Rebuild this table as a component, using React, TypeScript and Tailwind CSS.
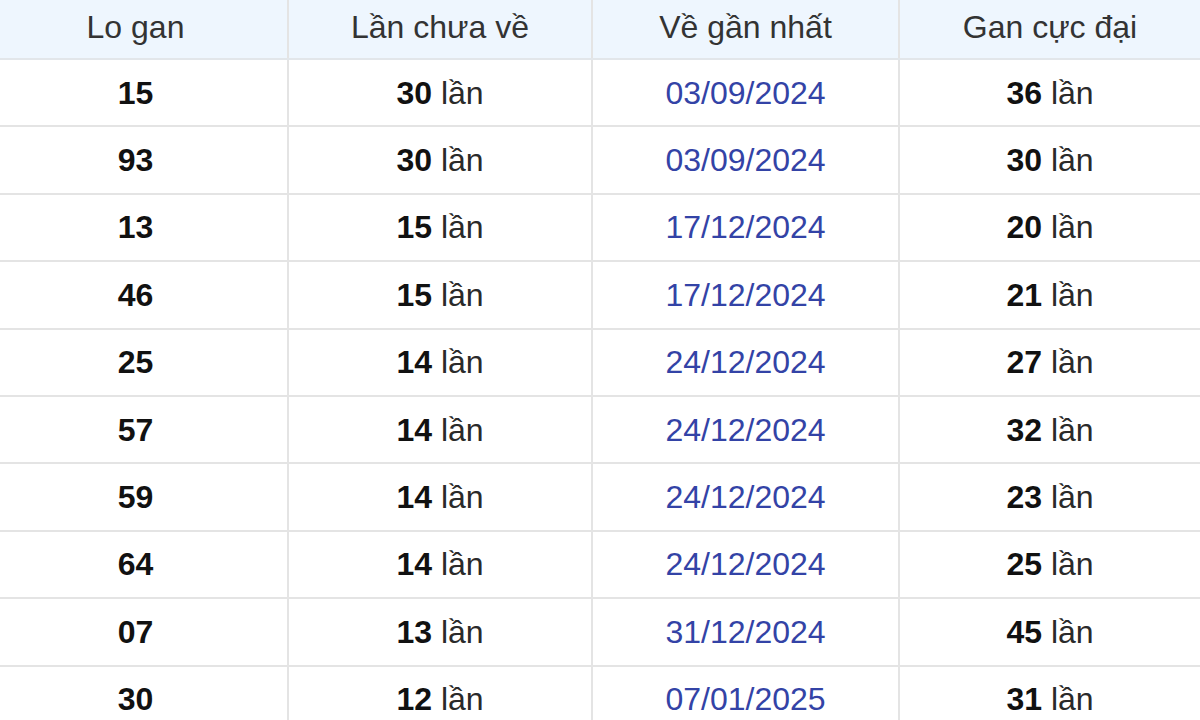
import React from "react";

interface Row {
  so: string;
  chuaVe: number;
  ganNhat: string;
  cucDai: number;
}

const rows: Row[] = [
  { so: "15", chuaVe: 30, ganNhat: "03/09/2024", cucDai: 36 },
  { so: "93", chuaVe: 30, ganNhat: "03/09/2024", cucDai: 30 },
  { so: "13", chuaVe: 15, ganNhat: "17/12/2024", cucDai: 20 },
  { so: "46", chuaVe: 15, ganNhat: "17/12/2024", cucDai: 21 },
  { so: "25", chuaVe: 14, ganNhat: "24/12/2024", cucDai: 27 },
  { so: "57", chuaVe: 14, ganNhat: "24/12/2024", cucDai: 32 },
  { so: "59", chuaVe: 14, ganNhat: "24/12/2024", cucDai: 23 },
  { so: "64", chuaVe: 14, ganNhat: "24/12/2024", cucDai: 25 },
  { so: "07", chuaVe: 13, ganNhat: "31/12/2024", cucDai: 45 },
  { so: "30", chuaVe: 12, ganNhat: "07/01/2025", cucDai: 31 },
];

const cols = "grid grid-cols-[289px_304px_307px_1fr]";
const cell = "flex items-center justify-center border-r-2 border-[#e4e4e4]";
const first = `${cell} pr-[16px]`;

const Lan = ({ n }: { n: number }) => (
  <span>
    <b className="font-bold text-[#111]">{n}</b> <span className="text-[#2a2a2a]">lần</span>
  </span>
);

export default function App() {
  return (
    <div
      className="w-[1200px] h-[720px] overflow-hidden bg-white text-[32px] leading-none"
      style={{ fontFamily: '"Liberation Sans", Arial, sans-serif' }}
    >
      {/* tiêu đề bảng */}
      <div className={`${cols} h-[60px] bg-[#eef6fe] border-b-2 border-[#e2e6ea] text-[#333]`}>
        <div className={first}><span className="pb-[4px]">Lo gan</span></div>
        <div className={cell}><span className="pb-[4px]">Lần chưa về</span></div>
        <div className={cell}><span className="pb-[4px]">Về gần nhất</span></div>
        <div className="flex items-center justify-center"><span className="pb-[4px]">Gan cực đại</span></div>
      </div>

      {rows.map((r) => (
        <div key={r.so} className={`${cols} h-[67.4px] border-b-2 border-[#e4e4e4]`}>
          <div className={`${first} font-bold text-[#111]`}>{r.so}</div>
          <div className={cell}>
            <Lan n={r.chuaVe} />
          </div>
          <div className={`${cell} text-[#3343a6]`}>{r.ganNhat}</div>
          <div className="flex items-center justify-center">
            <Lan n={r.cucDai} />
          </div>
        </div>
      ))}
    </div>
  );
}
